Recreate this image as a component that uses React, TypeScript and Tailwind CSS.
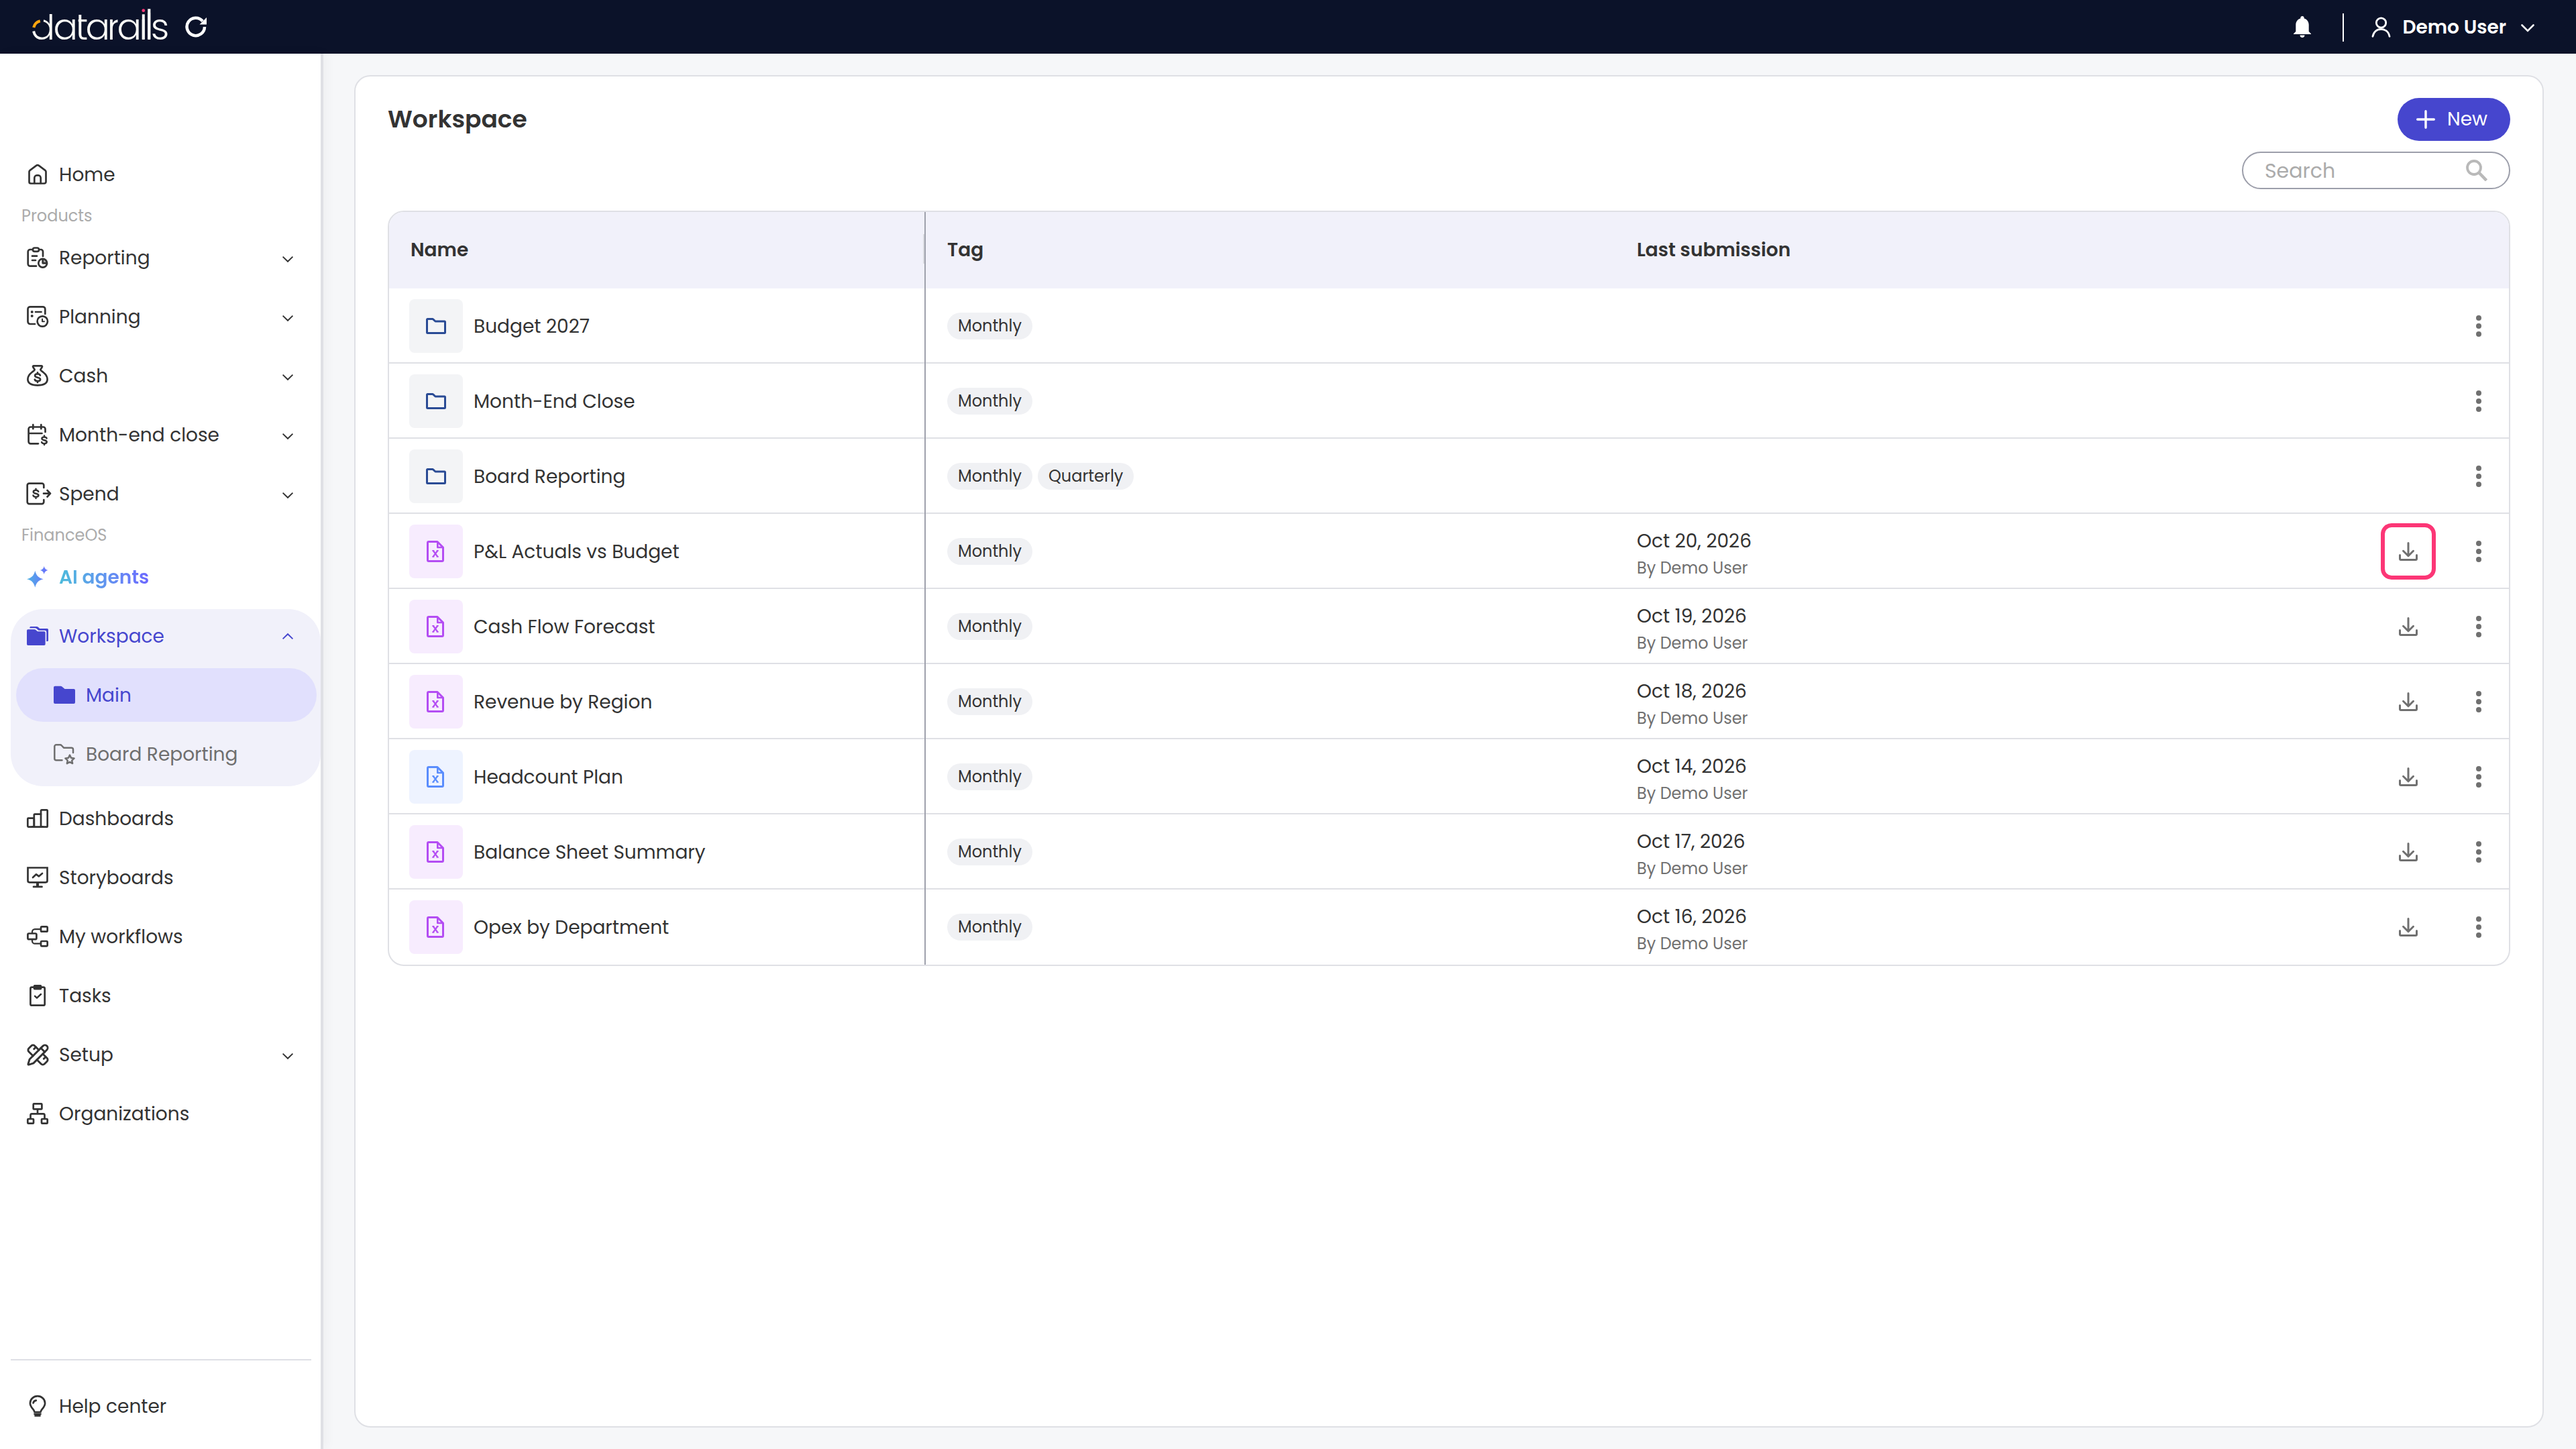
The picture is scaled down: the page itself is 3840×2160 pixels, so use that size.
import React from 'react';
import { PencilRuler } from 'lucide-react';

const Svg = ({ children }: { children: React.ReactNode }) => (
  <svg
    viewBox="0 0 32 32"
    fill="none"
    stroke="currentColor"
    strokeWidth={2.7}
    strokeLinecap="round"
    strokeLinejoin="round"
    className="size-8 shrink-0 overflow-visible"
  >
    {children}
  </svg>
);

const Dollar = ({ x, y, scale = 1 }: { x: number; y: number; scale?: number }) => (
  <g transform={`translate(${x} ${y}) scale(${scale})`}>
    <path d="M0-7.4v2M0 5.4v2M3.9-3.1C3.4-4.5 1.9-5.3 0-5.3c-2.3 0-3.9 1-3.9 2.600C-3.9.9 4.1-.9 4.1 2.700 4.1 4.3 2.4 5.3 0 5.3c-2.2 0-3.7-.8-4.2-2.3" />
  </g>
);

const HomeIcon = () => (
  <Svg>
    <path d="M3.5 12.3c0-1 .4-1.8 1.2-2.4l9.3-7a3.3 3.3 0 0 1 4 0l9.300 7c.8.6 1.2 1.4 1.2 2.4V27a2.500 2.500 0 0 1-2.500 2.500H6A2.500 2.500 0 0 1 3.500 27z" />
    <path d="M11.3 29v-7.500c0-2.300 1.500-4.100 3.600-4.100h2.200c2.100 0 3.600 1.800 3.600 4.100V29" />
  </Svg>
);

const ReportingIcon = () => (
  <Svg>
    <path d="M8.500 4H5a3.300 3.300 0 0 0-3.300 3.300v18A3.300 3.300 0 0 0 5 28.700h9M18.500 4H21a3 3 0 0 1 3 3v7" />
    <rect x="9" y="1.5" width="9" height="5.3" rx="2.6" />
    <path d="M8 13.700h7M8 20h5" />
    <circle cx="23.7" cy="24.3" r="6.4" />
    <path d="M23.700 18.500v5.800h5.800" />
    <path d="M24 18.500a6 6 0 0 1 5.500 5.500H24z" fill="currentColor" stroke="none" opacity=".45" />
  </Svg>
);

const PlanningIcon = () => (
  <Svg>
    <path d="M12 27H5a3.500 3.500 0 0 1-3.500-3.500V4.800A3.500 3.500 0 0 1 5 1.300h18.800a3.500 3.500 0 0 1 3.500 3.500V12" />
    <path d="M13 9h8.500" />
    <circle cx="7.7" cy="9" r="2" fill="currentColor" stroke="none" />
    <circle cx="7.7" cy="15" r="2" fill="currentColor" stroke="none" />
    <circle cx="23.3" cy="23" r="7.7" />
    <path d="M23 19.500V23.300h3" strokeWidth="2" />
  </Svg>
);

const CashIcon = () => (
  <Svg>
    <path d="M10.300 1.400h11.400c1.200 0 1.600 1 1 1.900L20.300 7c.3 1.500 2 2.200 4.200 4 3.500 2.700 6.100 6 6.100 10.300 0 6-4.500 9-14.600 9s-14.600-3-14.600-9c0-4.300 2.600-7.600 6.100-10.300 2.200-1.800 3.900-2.500 4.200-4L9.300 3.300c-.6-.9-.2-1.900 1-1.900z" />
    <Dollar x={16} y={18.7} />
  </Svg>
);

const MonthEndIcon = () => (
  <Svg>
    <path d="M17 29.300H5.600a3 3 0 0 1-3-3V7.500a3 3 0 0 1 3-3H24.500a3 3 0 0 1 3 3V12M3 14h19.500M9.300 1.200v6M21.300 1.200v6" />
    <Dollar x={26} y={24.3} scale={0.92} />
  </Svg>
);

const SpendIcon = () => (
  <Svg>
    <path d="M25.300 7V3.500A2.800 2.800 0 0 0 22.500.7H3.500A2.800 2.800 0 0 0 .7 3.500v24.800a2.800 2.800 0 0 0 2.800 2.800h19a2.800 2.800 0 0 0 2.800-2.800V25" />
    <path d="M25 15.700h10M30.500 11l4.500 4.700-4.500 4.800" />
    <Dollar x={13.5} y={15.7} scale={0.95} />
  </Svg>
);

const SparkleIcon = () => (
  <Svg>
    <defs>
      <linearGradient id="spark" x1="0" y1="0" x2="32" y2="0" gradientUnits="userSpaceOnUse">
        <stop stopColor="#4fb3e3" />
        <stop offset="1" stopColor="#6b6cff" />
      </linearGradient>
    </defs>
    <g fill="url(#spark)" stroke="none">
      <path d="M12.300 6.700c2 7.600 4.700 10.400 12.300 12.500-7.600 2.100-10.300 4.900-12.300 12.500C10.300 24.100 7.600 21.300 0 19.200 7.600 17.100 10.300 14.300 12.300 6.700z" />
      <path d="M25.700 0c1 3.800 2.400 5.100 6.200 6-3.800.9-5.200 2.200-6.200 6-1-3.800-2.400-5.100-6.200-6 3.800-.9 5.200-2.200 6.200-6z" />
    </g>
  </Svg>
);

const FoldersIcon = () => (
  <Svg>
    <g fill="currentColor" stroke="none">
      <path d="M0 8a1.700 1.700 0 0 1 1.700-1.700h9.800c.7 0 1.200.3 1.700.7L16 9.300h9.900A1.700 1.700 0 0 1 27.600 11v17.300a1.700 1.700 0 0 1-1.700 1.700H1.700A1.700 1.700 0 0 1 0 28.300z" />
      <path d="M4.300 4.300V3.700C4.300 2.700 5 2 6 2h8.800c.7 0 1.200.2 1.700.6L19.300 5h11A1.700 1.700 0 0 1 32 6.700v15.700c0 1-.8 1.700-1.700 1.700h-1V10c0-1.300-1-2.300-2.300-2.300H17.500l-3.200-2.600c-.6-.5-1.300-.8-2.100-.8z" />
    </g>
  </Svg>
);

const FolderSolidIcon = () => (
  <Svg>
    <path
      d="M0 4.700a2 2 0 0 1 2-2h8.500c.7 0 1.300.2 1.900.7L16.500 7H30a2 2 0 0 1 2 2v18a2 2 0 0 1-2 2H2a2 2 0 0 1-2-2z"
      fill="currentColor"
      stroke="none"
    />
  </Svg>
);

const FolderStarIcon = () => (
  <Svg>
    <path d="M12.500 25.300H3.800a2.500 2.500 0 0 1-2.500-2.500V4.800a2.500 2.500 0 0 1 2.500-2.500h6c.7 0 1.200.2 1.700.7L15 6.700h11.500A2.500 2.500 0 0 1 29 9.200V14" strokeWidth="2.5" />
    <path d="M24 17.600l2 4.200 4.600.6-3.400 3.200.9 4.500-4.100-2.200-4.100 2.200.9-4.500-3.400-3.200 4.600-.6z" strokeWidth="2.5" />
  </Svg>
);

const DashboardsIcon = () => (
  <Svg>
    <rect x="1.3" y="15.6" width="9.5" height="13" rx="1" />
    <path d="M10.800 28.600V11a1.300 1.300 0 0 1 1.300-1.300H21" />
    <rect x="21" y="3.3" width="9.7" height="25.3" rx="1.2" />
    <path d="M8 28.600h16" />
  </Svg>
);

const StoryboardsIcon = () => (
  <Svg>
    <path d="M1.500 1.500h29v19.300a2.500 2.500 0 0 1-2.500 2.500H4a2.500 2.500 0 0 1-2.500-2.500z" strokeLinejoin="miter" />
    <path d="M16 23.500V29" strokeWidth="4" strokeLinecap="butt" />
    <path d="M10 29.900h12.500M9 16l5-4.700 4 3 5-4.300" />
  </Svg>
);

const WorkflowsIcon = () => (
  <Svg>
    <rect x="21" y="1.4" width="9.7" height="7.3" rx="1.5" />
    <rect x="21" y="23" width="9.7" height="7.3" rx="1.5" />
    <rect x="1.4" y="11.5" width="13" height="8.7" rx="1.8" />
    <path d="M8 11V9.200a4 4 0 0 1 4-4h8.500M8 20.500v2.200a4 4 0 0 0 4 4h8.500" strokeWidth="2.3" />
  </Svg>
);

const TasksIcon = () => (
  <Svg>
    <rect x="5.4" y="3.7" width="21.3" height="27" rx="2" />
    <rect x="9.7" y="0" width="12.6" height="7.4" rx="2" fill="currentColor" stroke="none" />
    <path d="M12 16.800l3 2.800 6-5.600" strokeWidth="2.5" />
  </Svg>
);

const SetupIcon = () => <PencilRuler size={35} strokeWidth={2} className="-m-[1.5px] shrink-0" />;

const OrganizationsIcon = () => (
  <Svg>
    <rect x="9.7" y="1.4" width="12.7" height="8" rx="1" />
    <rect x="1.3" y="24" width="8.7" height="6.7" rx="1" />
    <rect x="22" y="24" width="8.7" height="6.7" rx="1" />
    <path d="M16 10v6.300M5.500 23v-4.700a2 2 0 0 1 2-2h17a2 2 0 0 1 2 2V23" />
  </Svg>
);

const BulbIcon = () => (
  <Svg>
    <path d="M11.500 25c0-4-6.600-6.500-6.600-13.200a11.100 10.600 0 0 1 22.200 0C27.100 18.500 20.500 21 20.500 25z" />
    <path d="M11.500 27.800h9M12.500 30.500h7" />
    <path d="M9.500 11.500c.4-2 1.800-3.500 4.300-3.900" />
  </Svg>
);

const Chevron = ({ className = '' }: { className?: string }) => (
  <svg viewBox="0 0 16 9" className={`h-[9px] w-4 overflow-visible ${className}`} fill="none" stroke="currentColor" strokeWidth="1.9">
    <path d="M.6.6 8 7.800l7.400-7.200" />
  </svg>
);

const FolderIcon = () => (
  <svg viewBox="0 0 30 24" className="h-6 w-[30px]" fill="none" stroke="currentColor" strokeWidth="3" strokeLinejoin="round">
    <path d="M1.500 2.500c0-.6.4-1 1-1h7.300c.3 0 .6.1.8.3L14 5h13.500c.6 0 1 .4 1 1v15.500c0 .6-.4 1-1 1h-25c-.6 0-1-.4-1-1z" />
  </svg>
);

const SheetIcon = () => (
  <svg viewBox="0 0 26 32" className="mr-0.5 h-8 w-[26px]" fill="none" stroke="currentColor" strokeWidth="3" strokeLinejoin="round">
    <path d="M1.500 3c0-.8.7-1.500 1.500-1.500h13L24.500 10v19c0 .8-.7 1.500-1.500 1.500H3c-.8 0-1.500-.7-1.500-1.500z" />
    <path d="M16.300 2v8H24" strokeWidth="2.6" />
    <path d="M9.800 15l6.400 8.600M16.200 15l-6.400 8.600" strokeWidth="2.3" />
    <path d="M8.300 14.800h3M14.700 14.800h3M8.300 23.800h3M14.700 23.800h3" strokeWidth="1.7" />
  </svg>
);

const DownloadIcon = () => (
  <svg viewBox="0 0 28 28" className="size-7" fill="none" stroke="currentColor" strokeWidth="3" strokeLinecap="round" strokeLinejoin="round">
    <path d="M14 1.500V20.500M6.500 13.300l7.500 7.500 7.500-7.500M1.500 19.500v5.500c0 .8.7 1.500 1.500 1.500h22c.8 0 1.500-.7 1.500-1.500v-5.500" />
  </svg>
);

const RefreshIcon = () => (
  <svg viewBox="0 0 32 32" className="ml-6 size-8" fill="none" stroke="white" strokeWidth="4.5">
    <path d="M29 16A13.200 13.200 0 1 1 26 7.500" />
    <path d="M32 2v10.500H21.500z" fill="white" stroke="none" />
  </svg>
);

const BellIcon = () => (
  <svg viewBox="0 0 28 32" className="ml-auto h-8 w-7" fill="white">
    <path d="M14 0c1.500 0 2.700 1.100 2.700 2.700v.8c4.300 1.200 7 4.900 7 9.500V23l3.300 3.200v.8H1v-.8L4.300 23V13c0-4.600 2.700-8.300 7-9.500v-.8C11.300 1.100 12.500 0 14 0zM10.500 28.500h7c0 2-1.500 3.500-3.500 3.500s-3.500-1.500-3.500-3.500z" />
  </svg>
);

const UserIcon = () => (
  <svg viewBox="0 0 30 32" className="h-8 w-[30px]" fill="none" stroke="white" strokeWidth="2.8" strokeLinecap="round">
    <circle cx="14.5" cy="10" r="7.2" />
    <path d="M2 30.300c1.300-6.800 6.300-10.800 12.500-10.800S25.700 23.500 27 30.300" />
  </svg>
);

const SearchIcon = () => (
  <svg viewBox="0 0 32 32" className="size-8 text-[#b9b9b9]" fill="none" stroke="currentColor" strokeWidth="3.8">
    <circle cx="12" cy="12" r="10" />
    <path d="M19.500 19.500 30.500 31" strokeWidth="4.5" />
  </svg>
);

const Logo = () => (
  <svg viewBox="0 0 204 80" className="h-20 w-[204px] overflow-visible">
    <text x="-2.500 31.500 64 79.500 111.800 126.500 159.500 168 176.800" y="58.500" fill="#fbfbf7" fontSize="54" fontWeight="300">
      datarails
    </text>
    {/* trims around the letters */}
    <g fill="#0b1229">
      <rect x="25" y="14" width="7" height="7" />
      <rect x="64.5" y="25" width="4.200" height="8" />
      <rect x="127.500" y="25" width="3.500" height="9" />
      <rect x="160.500" y="14" width="10" height="10" />
    </g>
    <g fill="#fbfbf7">
      <rect x="163.800" y="21.300" width="4" height="37.200" />
      <rect x="172.200" y="13.300" width="4.200" height="45.200" />
    </g>
    <path d="M2 46.500A13.200 13.200 0 0 1 17 30.700" fill="none" stroke="#0b1229" strokeWidth="7" />
    <path d="M2.200 41A13.200 13.200 0 0 1 11.800 31.300" fill="none" stroke="#fda50f" strokeWidth="4.2" />
    <circle cx="165.800" cy="15.700" r="2.400" fill="#fc3676" />
  </svg>
);

interface NavItem {
  label: string;
  icon: React.ReactNode;
  expandable?: boolean;
}

const products: NavItem[] = [
  { label: 'Reporting', icon: <ReportingIcon />, expandable: true },
  { label: 'Planning', icon: <PlanningIcon />, expandable: true },
  { label: 'Cash', icon: <CashIcon />, expandable: true },
  { label: 'Month-end close', icon: <MonthEndIcon />, expandable: true },
  { label: 'Spend', icon: <SpendIcon />, expandable: true },
];

const tools: NavItem[] = [
  { label: 'Dashboards', icon: <DashboardsIcon /> },
  { label: 'Storyboards', icon: <StoryboardsIcon /> },
  { label: 'My workflows', icon: <WorkflowsIcon /> },
  { label: 'Tasks', icon: <TasksIcon /> },
  { label: 'Setup', icon: <SetupIcon />, expandable: true },
  { label: 'Organizations', icon: <OrganizationsIcon /> },
];

const NavRow = ({ label, icon, expandable }: NavItem) => (
  <div className="flex h-20 items-center gap-4 pr-[41px] pl-10">
    {icon}
    <span className="pt-0.5">{label}</span>
    {expandable && <Chevron className="mt-1 ml-auto" />}
  </div>
);

interface FileRow {
  name: string;
  kind: 'folder' | 'purple' | 'blue';
  tags: string[];
  date?: string;
  highlighted?: boolean;
}

const rows: FileRow[] = [
  { name: 'Budget 2027', kind: 'folder', tags: ['Monthly'] },
  { name: 'Month-End Close', kind: 'folder', tags: ['Monthly'] },
  { name: 'Board Reporting', kind: 'folder', tags: ['Monthly', 'Quarterly'] },
  { name: 'P&L Actuals vs Budget', kind: 'purple', tags: ['Monthly'], date: 'Oct 20, 2026', highlighted: true },
  { name: 'Cash Flow Forecast', kind: 'purple', tags: ['Monthly'], date: 'Oct 19, 2026' },
  { name: 'Revenue by Region', kind: 'purple', tags: ['Monthly'], date: 'Oct 18, 2026' },
  { name: 'Headcount Plan', kind: 'blue', tags: ['Monthly'], date: 'Oct 14, 2026' },
  { name: 'Balance Sheet Summary', kind: 'purple', tags: ['Monthly'], date: 'Oct 17, 2026' },
  { name: 'Opex by Department', kind: 'purple', tags: ['Monthly'], date: 'Oct 16, 2026' },
];

const tileStyles = {
  folder: 'bg-[#f3f4f6] text-[#2a4b95]',
  purple: 'bg-[#f7ecfe] text-[#b44df3]',
  blue: 'bg-[#eef3ff] text-[#5a8dfd]',
};

export default function App() {
  return (
    <div className="flex h-[2160px] w-[3840px] flex-col bg-[#f6f7f9] font-[Poppins,Inter,sans-serif] text-[28px] text-[#333333]">
      <header className="flex h-20 shrink-0 items-center bg-[#0b1229] pr-[62px] pl-12 text-white">
        <Logo />
        <RefreshIcon />
        <BellIcon />
        <div className="mt-0.5 mr-[41px] ml-[46px] h-[42px] w-0.5 bg-white" />
        <UserIcon />
        <span className="ml-4 pt-0.5 font-semibold">Demo User</span>
        <svg viewBox="0 0 20 12" className="mt-[3px] ml-[22px] h-3 w-5" fill="none" stroke="white" strokeWidth="2.6" strokeLinecap="round">
          <path d="M1.500 1.500 10 10l8.500-8.500" />
        </svg>
      </header>

      <div className="flex min-h-0 flex-1">
        {/* Sidebar */}
        <aside className="flex w-[482px] shrink-0 flex-col border-r-4 border-[#dfe0e5] bg-white pt-[140px] pb-6 shadow-[4px_0_16px_rgba(0,0,0,0.04)]">
          <NavRow label="Home" icon={<HomeIcon />} />
          <div className="flex h-11 items-center pl-8 text-2xl text-[#ababab]">Products</div>
          <nav className="flex flex-col gap-2">
            {products.map((item) => (
              <NavRow key={item.label} {...item} />
            ))}
          </nav>
          <div className="flex h-11 items-center pl-8 text-2xl text-[#ababab]">FinanceOS</div>
          <div className="flex h-20 items-center gap-4 pl-10">
            <SparkleIcon />
            <span className="bg-linear-to-r from-[#4cbbdb] to-[#6c67ff] bg-clip-text pt-0.5 font-semibold text-transparent">AI agents</span>
          </div>

          <div className="my-2 ml-4 flex flex-col gap-2 rounded-[48px] bg-[#f1f1fa] pb-2">
            <div className="flex h-20 items-center gap-4 pr-[41px] pl-6 text-[#4646ce]">
              <FoldersIcon />
              <span className="pt-0.5">Workspace</span>
              <Chevron className="ml-auto rotate-180" />
            </div>
            <div className="mr-1.5 ml-2 flex h-20 items-center gap-4 rounded-full bg-[#e1e0fd] pl-14 text-[#4646ce]">
              <FolderSolidIcon />
              <span className="pt-0.5">Main</span>
            </div>
            <div className="ml-2 flex h-20 items-center gap-4 pl-14 text-[#6f6f6f]">
              <FolderStarIcon />
              <span className="pt-0.5">Board Reporting</span>
            </div>
          </div>

          <nav className="flex flex-col gap-2">
            {tools.map((item) => (
              <NavRow key={item.label} {...item} />
            ))}
          </nav>

          <div className="mt-auto">
            <div className="mr-3.5 mb-7 ml-4 h-0.5 bg-[#dedfe5]" />
            <NavRow label="Help center" icon={<BulbIcon />} />
          </div>
        </aside>

        {/* Workspace panel */}
        <main className="mt-8 mr-12 mb-8 ml-[46px] flex-1 rounded-3xl border-2 border-[#dfe0e5] bg-white px-12 pt-8">
          <div className="flex h-16 items-center justify-between">
            <h1 className="text-4xl font-semibold">Workspace</h1>
            <button className="flex h-16 w-42 items-center rounded-full bg-[#4646ce] pl-7 text-white">
              <svg viewBox="0 0 28 28" className="size-7" stroke="white" strokeWidth="3.4" strokeLinecap="round">
                <path d="M14 1.700v24.600M1.700 14h24.600" />
              </svg>
              <span className="ml-[18px]">New</span>
            </button>
          </div>
          <div className="mt-4 ml-auto flex h-14 w-100 items-center justify-between rounded-full border-2 border-[#9c9eaa] px-8 text-[#ababab]">
            <span className="text-[30px]">Search</span>
            <SearchIcon />
          </div>

          <div className="mt-8 overflow-hidden rounded-3xl border-2 border-[#dfe0e5]">
            <div className="grid h-[114px] grid-cols-[800px_1030px_1fr] bg-[#f1f1fa] font-semibold">
              <div className="flex items-center justify-between border-r-2 border-[#9fa1ac] pl-8">
                <span>Name</span>
                <div className="mb-1 h-11 w-0.5 bg-[#dadbe0]" />
              </div>
              <div className="flex items-center pl-8">Tag</div>
              <div className="flex items-center pl-[30px]">Last submission</div>
            </div>
            {rows.map((row) => (
              <div
                key={row.name}
                className="grid h-28 grid-cols-[800px_1030px_1fr] shadow-[inset_0_-2px_0_#dfe0e5] last:shadow-none"
              >
                <div className="flex items-center gap-4 border-r-2 border-[#9fa1ac] pl-[30px]">
                  <div className={`flex size-20 items-center justify-center rounded-lg ${tileStyles[row.kind]}`}>
                    {row.kind === 'folder' ? <FolderIcon /> : <SheetIcon />}
                  </div>
                  <span className="pt-0.5">{row.name}</span>
                </div>
                <div className="flex items-center gap-2 pl-8">
                  {row.tags.map((tag) => (
                    <span key={tag} className="flex h-10 items-center rounded-full bg-[#f0f1f4] px-4 text-2xl">
                      {tag}
                    </span>
                  ))}
                </div>
                <div className="flex items-center justify-end text-[#707070]">
                  {row.date && (
                    <>
                      <div className="mr-auto flex flex-col pt-[9px] pl-[30px]">
                        <span className="leading-10 text-[#333333]">{row.date}</span>
                        <span className="text-2xl leading-10">By Demo User</span>
                      </div>
                      <div
                        className={`flex h-[84px] w-[82px] items-center justify-center rounded-2xl ${row.highlighted ? 'border-[6px] border-[#fc3676]' : ''}`}
                      >
                        <DownloadIcon />
                      </div>
                    </>
                  )}
                  <svg viewBox="0 0 8 32" className="mr-[41px] ml-[60px] h-8 w-2" fill="currentColor">
                    <circle cx="4" cy="4" r="4" />
                    <circle cx="4" cy="16" r="4" />
                    <circle cx="4" cy="28" r="4" />
                  </svg>
                </div>
              </div>
            ))}
          </div>
        </main>
      </div>
    </div>
  );
}
